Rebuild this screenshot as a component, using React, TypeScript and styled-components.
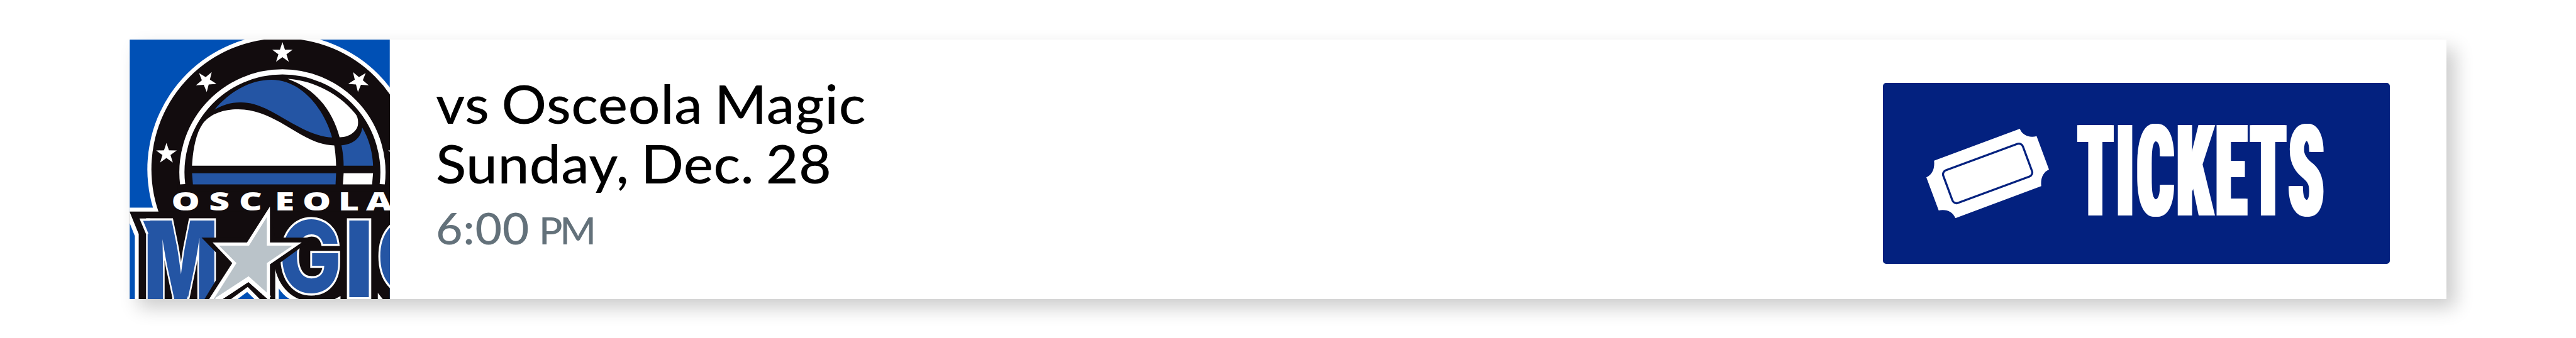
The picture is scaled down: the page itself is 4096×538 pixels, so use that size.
import styled, { createGlobalStyle } from 'styled-components';

const GlobalStyle = createGlobalStyle`
  * {
    box-sizing: border-box;
  }

  body {
    margin: 0;
    background: #ffffff;
    font-family: Lato, 'Liberation Sans', sans-serif;
  }
`;

export default function App() {
  return (
    <>
      <GlobalStyle />
      <Page>
        <GameCard>
          <TeamLogo />
          <GameInfo>
            <Line>vs Osceola Magic</Line>
            <Line $spacing={0.4}>Sunday, Dec. 28</Line>
            <Time>
              6:00 <Meridiem>PM</Meridiem>
            </Time>
          </GameInfo>
          <TicketButton type='button'>
            <TicketIcon />
            <ButtonLabel>TICKETS</ButtonLabel>
          </TicketButton>
        </GameCard>
      </Page>
    </>
  );
}

function starPoints(cx: number, cy: number, rotation = 0) {
  return Array.from({ length: 10 }, (_, i) => {
    const r = i % 2 === 0 ? 59 : 23;
    const a = ((i * 36 + rotation) * Math.PI) / 180;
    return `${cx + r * Math.sin(a)},${cy - r * Math.cos(a)}`;
  }).join(' ');
}

function TeamLogo() {
  return (
    <Logo viewBox='59 73 1415 1415' role='img' aria-label='Osceola Magic'>
      <rect x='59' y='73' width='1415' height='1415' fill='#0050b5' />

      {/* outer ring */}
      <circle cx='890' cy='779' r='735' fill='#ffffff' />
      <path d='M59 988H212V1200H59Z' fill='#ffffff' />
      <circle cx='890' cy='779' r='713' fill='#120c0e' />
      <path d='M59 1010H1474V1488H59Z' fill='#120c0e' />
      <path d='M59 1012L108 1132V1488H59Z' fill='#ffffff' />
      <path d='M59 1073L87 1143V1488H59Z' fill='#0050b5' />

      {/* inner ring */}
      <path
        d='M347 862A547 547 0 1 1 1433 862'
        fill='none'
        stroke='#ffffff'
        strokeWidth='28'
      />
      <path d='M320 862H1460V900H320Z' fill='#120c0e' />

      {/* ball */}
      <path
        d='M398 760C402 690 415 590 455 533C500 472 580 452 650 453C740 455 805 483 880 525C990 587 1060 645 1172 650C1178 685 1181 722 1182 760Z'
        fill='#ffffff'
      />
      <path
        d='M520 455C600 360 710 292 830 292C1000 292 1120 460 1160 606C1080 602 1010 565 940 527C840 470 760 415 665 415C610 414 560 430 520 455Z'
        fill='#2455a4'
      />
      <path
        d='M918 287C1060 295 1200 370 1285 475C1300 492 1303 510 1301 535C1298 570 1255 606 1201 605C1165 470 1080 345 918 287Z'
        fill='#ffffff'
      />
      <path
        d='M1324 552C1362 615 1381 690 1383 760H1223C1223 722 1218 680 1211 649C1265 645 1318 615 1324 552Z'
        fill='#2455a4'
      />
      <path d='M398 801H1182L1179 862H403Z' fill='#2455a4' />
      <path d='M1223 801H1383L1378 862H1219Z' fill='#ffffff' />

      <g fill='#ffffff'>
        <polygon points={starPoints(890, 146)} />
        <polygon points={starPoints(474, 300, 176)} />
        <polygon points={starPoints(1305, 300, 184)} />
        <polygon points={starPoints(259, 695)} />
        <polygon points={starPoints(1521, 695)} />
      </g>

      <CityText transform='scale(1.42 1)' x='256 385 505 635 758.5 881 997' y='1003'>
        OSCEOLA
      </CityText>

      {/* outline showing below the lettering */}
      <path d='M850 1320C868 1400 915 1460 985 1488H850Z' fill='#ffffff' />
      <path d='M870 1428C885 1452 905 1472 932 1488H870Z' fill='#0050b5' />
      <path d='M1172 1488L1206 1470V1488Z' fill='#ffffff' />
      <path d='M1409 1453L1437 1488H1409Z' fill='#ffffff' />

      <NameText $weight={900} x='137' y='1496' fontSize='600' textLength='402' lengthAdjust='spacingAndGlyphs'>M</NameText>
      <path d='M112 1047H170V1135L147 1130Z' fill='#ffffff' />
      <path d='M132 1060H180V1140H160V1128Z' fill='#2455a4' />
      <path d='M288 1488L295 1472L300 1488ZM369 1488L376 1468V1488Z' fill='#ffffff' />
      <NameText x='871' y='1450' fontSize='540' textLength='342' lengthAdjust='spacingAndGlyphs'>G</NameText>
      <NameText x='1219' y='1476' fontSize='572' textLength='176' lengthAdjust='spacingAndGlyphs'>I</NameText>
      <NameText x='1404' y='1450' fontSize='540' textLength='348' lengthAdjust='spacingAndGlyphs'>C</NameText>

      {/* centre star */}
      <path
        d='M850 1152H1064L850 1308V1488H465L585 1290L450 1152H680L822 1005Z'
        fill='#120c0e'
      />
      <path
        d='M822 982V1178H995L822 1297V1488H810L705 1395L564 1488H490L617 1290L510 1178H697Z'
        fill='#ffffff'
      />
      <path d='M564 1488L705 1395L810 1488Z' fill='#120c0e' />
      <path
        d='M805 1040V1195H945L805 1290V1462L705 1364L538 1488H515L640 1290L545 1195H708Z'
        fill='#bac3c9'
      />
      <path d='M528 1488L705 1372L822 1477' fill='none' stroke='#ffffff' strokeWidth='16' />
      <path d='M608 1488L701 1420L768 1488Z' fill='#ffffff' />
      <path d='M644 1488L698 1448L739 1488Z' fill='#0050b5' />
    </Logo>
  );
}

function TicketIcon() {
  return (
    <Ticket viewBox='58 60 714 521' aria-hidden='true'>
      <path
        d='M602 60C617 97 655 114 700 103L772 297C738 313 722 348 727 394L227 581C212 544 175 527 130 536L58 343C92 328 108 293 103 246Z'
        fill='#ffffff'
      />
      <rect
        x='168'
        y='218.500'
        width='494'
        height='203'
        rx='25'
        fill='none'
        stroke='#03217f'
        strokeWidth='12'
        transform='rotate(-20.300 415 320)'
      />
    </Ticket>
  );
}

const Page = styled.main`
  width: 4096px;
  height: 538px;
  padding: 62.500px 205.600px 62px;
  overflow: hidden;
`;

const GameCard = styled.article`
  display: flex;
  align-items: flex-start;
  height: 413.500px;
  background: #ffffff;
  box-shadow: 14px 14px 28px rgba(0, 0, 0, 0.2);
`;

const Logo = styled.svg`
  flex: none;
  width: 414px;
  height: 413.500px;
`;

const CityText = styled.text`
  font-family: 'Noto Sans', sans-serif;
  font-size: 137px;
  font-weight: 900;
  text-anchor: middle;
  fill: #ffffff;
`;

const NameText = styled.text<{ $weight?: number }>`
  font-family: Inter, sans-serif;
  font-weight: ${({ $weight = 800 }) => $weight};
  fill: #2455a4;
  stroke: #ffffff;
  stroke-width: 24px;
  paint-order: stroke;
`;

const GameInfo = styled.div`
  flex: 1;
  padding: 54px 0 0 73.500px;
`;

const Line = styled.p<{ $spacing?: number }>`
  margin: 0;
  font-size: 85px;
  font-weight: 500;
  line-height: 95.600px;
  letter-spacing: ${({ $spacing = 0.6 }) => $spacing}px;
  word-spacing: -4px;
  white-space: nowrap;
  color: #000000;
  transform: scaleX(1.050);
  transform-origin: left center;
`;

const Time = styled(Line)`
  padding-top: 7px;
  font-size: 70px;
  word-spacing: -4px;
  color: #63717a;
`;

const Meridiem = styled.span`
  font-size: 59px;
  letter-spacing: -4px;
`;

const TicketButton = styled.button`
  display: flex;
  align-items: center;
  width: 806px;
  height: 287.600px;
  margin: 69.500px 90px 0 0;
  padding: 0 0 0 69px;
  border: 0;
  border-radius: 5px;
  background: #03217f;
`;

const Ticket = styled.svg`
  flex: none;
  width: 195px;
  height: 142.300px;
`;

const ButtonLabel = styled.span`
  width: 390px;
  margin: -4px 0 0 45px;
  font-family: Roboto, sans-serif;
  font-size: 202px;
  font-weight: 900;
  font-stretch: 75%;
  line-height: 1.200;
  text-align: left;
  letter-spacing: 6.500px;
  white-space: nowrap;
  color: #ffffff;
  text-shadow:
    5px 0 #ffffff,
    -5px 0 #ffffff;
  transform: scaleX(0.518);
  transform-origin: left center;
`;
